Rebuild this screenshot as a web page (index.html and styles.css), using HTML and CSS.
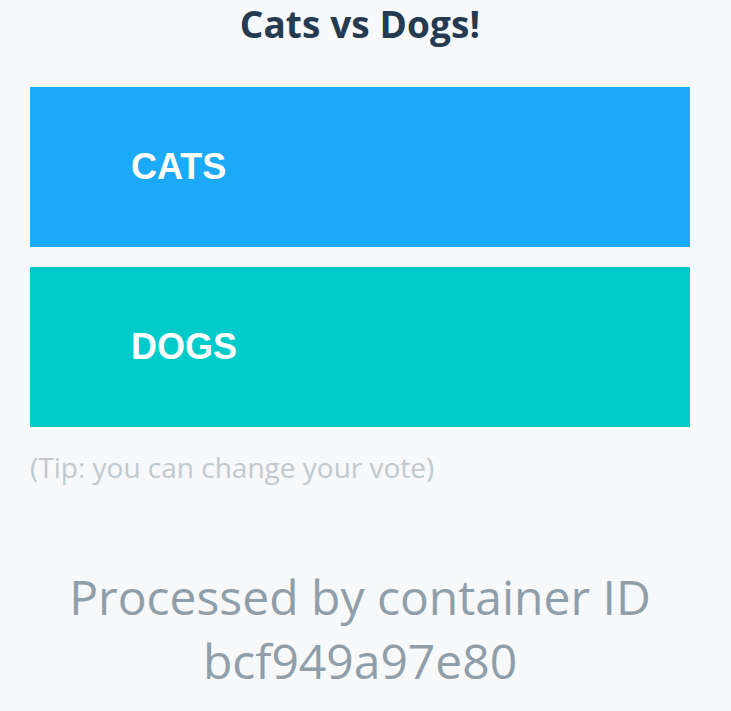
FILE: index.html
```html
<!DOCTYPE html>
<html>
<head>
<meta charset="utf-8">
<title>Cats vs Dogs!</title>
<link rel="stylesheet" href="styles.css">
</head>
<body>
<div class="page">
  <h3 class="title">Cats vs Dogs!</h3>
  <form class="choices">
    <button class="choice choice-a" type="button">CATS</button>
    <button class="choice choice-b" type="button">DOGS</button>
  </form>
  <div class="tip">(Tip: you can change your vote)</div>
  <div class="hostname">Processed by container ID bcf949a97e80</div>
</div>
</body>
</html>
```

FILE: styles.css
```css
html, body {
  margin: 0;
  padding: 0;
  background: #f7f8fa;
}
.page {
  width: 720px;
  height: 711px;
  display: flex;
  flex-direction: column;
  font-family: "Open Sans", sans-serif;
}
.title {
  margin: 0;
  padding: 0;
  text-align: center;
  font-size: 37px;
  font-weight: 700;
  line-height: 48px;
  letter-spacing: 0.1px;
  color: #253b52;
}
.choices {
  margin: 39px 30px 0 30px;
  display: flex;
  flex-direction: column;
  gap: 20px;
}
.choice {
  height: 160px;
  border: 0;
  border-radius: 0;
  padding: 0 0 0 101px;
  text-align: left;
  font-family: "Liberation Sans", Arial, sans-serif;
  font-weight: 700;
  font-size: 36px;
  color: #ffffff;
}
.choice-a { background: #1caaf8; }
.choice-b { background: #00cbca; }
.tip {
  margin: 22px 30px 0 30px;
  font-size: 28px;
  line-height: 36px;
  color: #c0c9ce;
}
.hostname {
  margin-top: 80px;
  padding: 0 50px;
  text-align: center;
  font-size: 48px;
  line-height: 64px;
  color: #8f9ea8;
}
```
